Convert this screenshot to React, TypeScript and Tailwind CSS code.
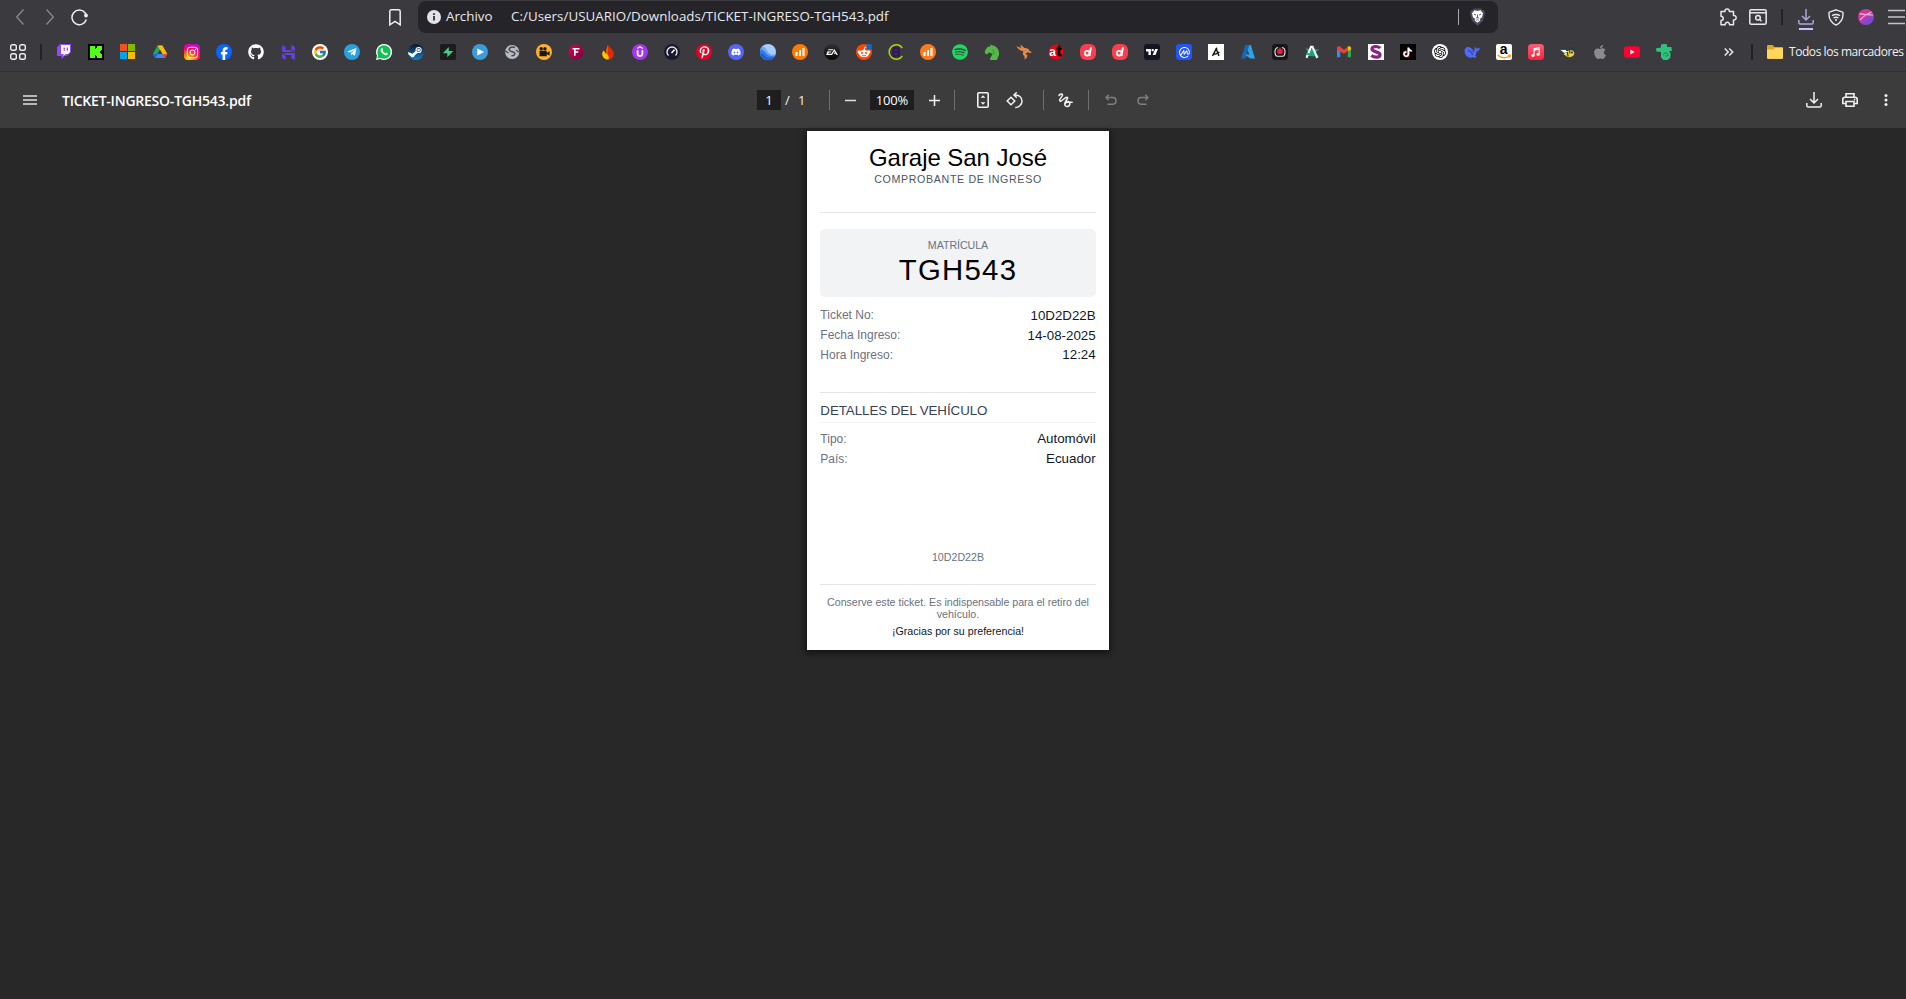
import React from "react";
import { FcGoogle } from "react-icons/fc";
import { FaApple, FaDiscord, FaGithub, FaPinterestP, FaInstagram, FaTelegramPlane } from "react-icons/fa";
import { SiHostinger, SiSpotify, SiTradingview, SiCoinmarketcap, SiOpenai, SiEa } from "react-icons/si";

type IconProps = { children: React.ReactNode };

const Svg = ({ children }: IconProps) => (
  <svg viewBox="0 0 16 16" className="h-4 w-4 overflow-visible">{children}</svg>
);

const Round = ({ className, children }: { className: string; children?: React.ReactNode }) => (
  <span className={`flex h-4 w-4 items-center justify-center overflow-hidden ${className}`}>{children}</span>
);

const Bars = ({ color }: { color: string }) => (
  <Svg>
    <circle cx="8" cy="8" r="8" fill={color} />
    <path d="M4.500 12V8M8 12V6M11.500 12V4" stroke="#fff" strokeWidth="2" />
  </Svg>
);

const LetterD = () => (
  <Svg>
    <rect width="16" height="16" rx="6" fill="#fb3d4e" />
    <circle cx="7.200" cy="9.200" r="2.300" fill="none" stroke="#fff" strokeWidth="1.800" />
    <path d="M11 3.200L9.400 12" stroke="#fff" strokeWidth="1.900" />
  </Svg>
);

const bookmarks: React.ReactNode[] = [
  <Svg>
    <path d="M4 0h11v8l-4 4H8.500L5.500 15.500V12H1V3z" fill="#9146ff" />
    <path d="M5 1h9v7l-2 2H9.500L7.500 12v-2H5z" fill="#fff" />
    <path d="M8.200 3.500v3.200M11.300 3.500v3.200" stroke="#9146ff" strokeWidth="1.300" />
  </Svg>,
  <Svg>
    <path d="M0 0h16v16H0z" fill="#000" />
    <path d="M2 2h5v3h1V4h1V2h5v4h-1v1h-1v2h1v1h1v4H9v-2H8v-1H7v3H2z" fill="#53fc18" />
  </Svg>,
  <Svg>
    <path d="M0 0h7v7H0z" fill="#f25022" />
    <path d="M8 0h7v7H8z" fill="#7fba00" />
    <path d="M0 8h7v7H0z" fill="#00a4ef" />
    <path d="M8 8h7v7H8z" fill="#ffb900" />
  </Svg>,
  <Svg>
    <path d="M5.500 1.500h5L5.500 10 3 14 .8 10z" fill="#1fa463" />
    <path d="M5.500 1.500h5L15.300 10h-5z" fill="#fbbc04" />
    <path d="M3.200 14L5.600 10h9.700L13 14z" fill="#4285f4" />
    <path d="M.8 10h4.800L3.200 14z" fill="#1967d2" />
    <path d="M10.300 10h5L13 14z" fill="#ea4335" />
    <path d="M8 6l2.300 4H5.700z" fill="#3b3a3f" />
  </Svg>,
  <Round className="rounded-[4px] bg-[radial-gradient(circle_at_25%_105%,#ffd600_8%,#ff7a00_32%,#ff0169_60%,#d300c5_82%,#7638fa_100%)] text-white"><FaInstagram size={13} /></Round>,
  <Svg>
    <circle cx="8" cy="8" r="8" fill="#0866ff" />
    <path d="M6.600 16v-5.400H4.900V8.100h1.700V7c0-2.700 1.200-3.900 3.800-3.900l1.200.1v2.200h-.9c-1.100 0-1.500.5-1.500 1.500v1.200h2.300l-.4 2.500H9.200V16z" fill="#fff" />
  </Svg>,
  <FaGithub size={16} color="#fff" />,
  <SiHostinger size={15} color="#673de6" />,
  <Round className="rounded-full bg-white"><FcGoogle size={14} /></Round>,
  <Round className="rounded-full bg-[#2aa1de] text-white"><FaTelegramPlane size={10} /></Round>,
  <Svg>
    <path d="M8 0a8 8 0 1 1-3.800 15L0 16l1-4.200A8 8 0 0 1 8 0z" fill="#fff" />
    <circle cx="8" cy="8" r="6.700" fill="#0fc152" />
    <path d="M2.300 10l-1 4.500L6 13.500z" fill="#0fc152" />
    <path d="M5.700 4.200c.5-.2.800 0 1 .5l.4 1c.1.300-.5.900-.5 1.100.6 1.100 1.400 1.900 2.600 2.400.3 0 .8-.9 1.100-.8l1.500.8c.2 1.500-1 2.100-2 2-2.600-.4-5-2.900-5.200-4.900 0-.9.500-1.700 1.100-2.100z" fill="#fff" />
  </Svg>,
  <Svg>
    <defs><linearGradient id="steam" x1="0" y1="0" x2="0" y2="1"><stop stopColor="#0b1530" /><stop offset="1" stopColor="#1383c1" /></linearGradient></defs>
    <circle cx="8" cy="8" r="8" fill="url(#steam)" />
    <path d="M0 8l4.500 1.800 4-3.500 2 1.800-3.800 3.400a2.200 2.200 0 0 1-4.200.4L.5 10.600z" fill="#fff" />
    <circle cx="10.600" cy="6" r="3.100" fill="#fff" />
    <circle cx="10.600" cy="6" r="2" fill="#0f2748" />
    <circle cx="10.600" cy="6" r="1.500" fill="#dce6f2" />
  </Svg>,
  <Svg>
    <rect width="16" height="16" rx="1.500" fill="#1c1c1c" />
    <path d="M8.800 3v4h4.500L7.300 13.200V9.300H2.800z" fill="#3ecf8e" />
  </Svg>,
  <Svg>
    <circle cx="8" cy="8" r="8" fill="#3d9dd8" />
    <path d="M5.300 4.500L12 8l-6.700 3.500z" fill="#fff" />
  </Svg>,
  <Svg>
    <circle cx="8.200" cy="8" r="7.100" fill="#b8bdc3" />
    <path d="M11 3.500C8.500 2.500 5 3.300 5.200 5.700c.2 2.400 5.800 1.600 5.600 4 0 1.500-1.700 2.100-3.300 2" fill="none" stroke="#44464c" strokeWidth="1.500" />
    <path d="M1.500 7L4.500 9M12 6l2.800 2.300" fill="none" stroke="#44464c" strokeWidth="1.200" />
  </Svg>,
  <Svg>
    <circle cx="8" cy="8" r="8" fill="#ffb02e" />
    <path d="M3.500 6.800h7.300v5.400H3.500zM10.800 9l2.800-2v4.800L10.800 10z" fill="#181818" />
    <circle cx="5.200" cy="4.700" r="1.700" fill="#181818" /><circle cx="8.900" cy="4.700" r="1.700" fill="#181818" />
  </Svg>,
  <Svg>
    <defs><linearGradient id="pinkF" x1="0" y1="0" x2="1" y2="1"><stop stopColor="#e60045" /><stop offset="1" stopColor="#720044" /></linearGradient></defs>
    <circle cx="8" cy="8" r="7.500" fill="url(#pinkF)" />
    <path d="M4.500 4.800h7M6.800 4.800v7M6.800 8h3.500" stroke="#fff" strokeWidth="1.600" fill="none" />
  </Svg>,
  <Svg>
    <path d="M8 .5c.8 3 5.800 4.500 5.800 9.300 0 3.700-2.800 5.700-5.800 5.700L5 12z" fill="#dd2c00" />
    <path d="M8 .5C7.600 3.200 6 4.800 6.200 8l1 6z" fill="#ff6d00" />
    <path d="M4 6.200C2.600 7.300 2 8.800 2.200 10.500c.3 3 2.800 5 6.300 5 1-3-1-5.500-2.500-6C5 9 4.300 7.800 4 6.200z" fill="#ffc400" />
  </Svg>,
  <Svg>
    <circle cx="8" cy="8" r="8" fill="#a435f0" />
    <path d="M5.200 4.400L8 2.800l2.800 1.600" stroke="#fff" strokeWidth="1.200" fill="none" />
    <path d="M5.600 6.300v3.500c0 3 4.800 3 4.800 0V6.300" stroke="#fff" strokeWidth="1.800" fill="none" />
  </Svg>,
  <Svg>
    <circle cx="8" cy="8" r="8" fill="#181a30" />
    <path d="M4.500 11.600a5 5 0 1 1 7 0" stroke="#e8e8ee" strokeWidth="1.400" fill="none" />
    <path d="M7.500 9l3-3.300" stroke="#fff" strokeWidth="1.600" />
  </Svg>,
  <Round className="rounded-full bg-[#e60023] text-white"><FaPinterestP size={13} className="mt-px" /></Round>,
  <Round className="rounded-full bg-[#5865f2] text-white"><FaDiscord size={10} /></Round>,
  <Svg>
    <clipPath id="earth"><circle cx="8" cy="8" r="8" /></clipPath>
    <g clipPath="url(#earth)">
      <path d="M0 0h16v16H0z" fill="#a7cdff" />
      <path d="M0 3c4-2 6 2 8 5s5 3 8 2v6H0z" fill="#6aa6fb" />
      <path d="M0 5.500c4-.5 5 3.500 8 5.500s6 1 8 0v5H0z" fill="#3478e8" />
      <path d="M0 9c3 0 4 3.500 7 4.500s5 .5 7-.5L12 16H0z" fill="#1a5fd0" />
    </g>
  </Svg>,
  <Bars color="#ff7a00" />,
  <Round className="rounded-full bg-linear-to-b from-[#303030] to-[#080808] text-white"><SiEa size={12} /></Round>,
  <Svg>
    <circle cx="8" cy="8" r="8" fill="#ff4500" />
    <circle cx="3.300" cy="8" r="1.700" fill="#fff" /><circle cx="12.700" cy="8" r="1.700" fill="#fff" />
    <ellipse cx="8" cy="9.600" rx="5" ry="3.700" fill="#fff" />
    <path d="M8 6l.8-3 2 .6" stroke="#fff" fill="none" />
    <circle cx="6" cy="8.900" r="1" fill="#ff4500" /><circle cx="10" cy="8.900" r="1" fill="#ff4500" />
    <path d="M5.800 11.200c1.300 1 3.100 1 4.400 0" stroke="#ff4500" fill="none" />
    <circle cx="13.300" cy="2.700" r="2.900" fill="#0a6bc6" />
  </Svg>,
  <Svg>
    <path d="M14.300 4A7.200 7.200 0 1 0 14.300 12" stroke="#a4d900" strokeWidth="1.500" fill="none" />
    <path d="M5.500 4h3.200c2.800 0 2.700 3.600.3 3.900 3 .3 2.900 4.100-.2 4.100H5.500zM5.500 8H9" fill="none" stroke="#341564" strokeWidth="2.200" />
  </Svg>,
  <Bars color="#ff7a1c" />,
  <Round className="rounded-full bg-[#3b3a3f] text-[#1ed760]"><SiSpotify size={16} /></Round>,
  <Svg>
    <path d="M1 6.500L3.500 3 6 2.500 6.500.5 8.500 1.500C13 2 15.500 6 15 11l-1 2-1 3H6c0-3 2-4 2.500-6.300L5 8.500 3 10.500.8 9z" fill="#55b848" />
    <path d="M8 6c1.500.5 2.300 2 2 4" stroke="#3b7835" strokeWidth=".8" fill="none" />
  </Svg>,
  <Svg>
    <path d="M.5 2l4.500 2L4.500.5 8.500 4c3 .1 4.500 1.200 5 2.800l2.300 1.500-1.300.8c-2.500-1.200-4.500-.5-4.800 1.200l1.800.7-.5 2.500-2.500 2.200c.8-3-.5-4-1.500-5C6.500 9 7 8 7.500 7.200 4.500 6.800 1.500 5.200.5 2z" fill="#e08a4a" />
  </Svg>,
  <Svg>
    <circle cx="8" cy="8" r="7.500" fill="#e90613" />
    <text x="1.300" y="12" fill="#fff" className="font-['Liberation_Sans'] text-[12px] font-bold">a</text>
    <text x="8.600" y="12.300" fill="#000" stroke="#000" strokeWidth=".8" className="font-['Liberation_Sans'] text-[14px] font-bold">t</text>
  </Svg>,
  <LetterD />,
  <LetterD />,
  <Round className="rounded-[3px] bg-[#131722] text-white"><SiTradingview size={12} /></Round>,
  <Round className="rounded-[3px] bg-[#2155f5] text-white"><SiCoinmarketcap size={11} /></Round>,
  <Svg>
    <path d="M0 0h16v16H0z" fill="#fff" />
    <path d="M4.500 12l3.700-7.200 2.800 7.200M4.500 10.500c3 0 5-1 7-2.500M7.500 4.800h1.800" stroke="#181818" strokeWidth="1.500" fill="none" />
  </Svg>,
  <Svg>
    <path d="M5.300 1h4.500L5.500 14.500H1z" fill="#1268b3" />
    <path d="M9.500 1h1.300L15 14.500h-4.600L4.500 10.500h4.800L7.700 6z" fill="#2fa3ea" />
  </Svg>,
  <Svg>
    <rect width="16" height="16" rx="3.500" fill="#171719" />
    <path d="M6 3.500C2.800 4 3 6 3 8s.2 4 2.500 4.300h5C12.800 12 13 10 13 8s.2-4-3-4.500" stroke="#e8e8e8" strokeWidth="1.100" fill="none" />
    <path d="M8 3l1.200 2.200h1.500v3.600L9.500 10h-3L5.300 8.800V5.200h1.500z" fill="#ee1b3a" />
  </Svg>,
  <Svg>
    <path d="M1.500 4.500l13.500 1-3.500 3 4 4.200-14.500-1 3.500-3z" fill="#14a878" />
    <path d="M2.500 13.800L7 2.800h1.500L13.300 14" stroke="#fff" strokeWidth="2" fill="none" />
    <path d="M2 10h3.500" stroke="#14a878" strokeWidth="1.800" />
  </Svg>,
  <Svg>
    <path d="M1 4v9.300h3.200V7z" fill="#4285f4" /><path d="M15 4v9.300h-3.200V7z" fill="#34a853" />
    <path d="M1 4.700V4c0-1.600 1.800-2.200 3.200-1.200L8 5.700v4L1 5.500z" fill="#ea4335" />
    <path d="M8 5.700l3.800-2.900v4L8 9.700z" fill="#ea4335" /><path d="M11.800 2.800C13.200 1.800 15 2.500 15 4v1.200l-3.200 2z" fill="#fbbc04" />
  </Svg>,
  <Svg>
    <path d="M0 0h16v16H0z" fill="#fff" />
    <path d="M12.200 4.200C9.500 1.700 4 2 4 5.100c0 3.600 8 2 8 5.600 0 3.200-5.800 3.200-8.600.7" stroke="#8b2384" strokeWidth="3.200" fill="none" />
  </Svg>,
  <Svg>
    <path d="M0 0h16v16H0z" fill="#000" />
    <path d="M8.100 3.500v6.300a2.200 2.200 0 1 1-2-2.200M8.100 3.500c.3 1.900 1.500 3 3.300 3" stroke="#25f4ee" strokeWidth="1.700" fill="none" />
    <path d="M8.900 4.100v6.300a2.200 2.200 0 1 1-2-2.200M8.900 4.100c.3 1.900 1.500 3 3.300 3" stroke="#fe2c55" strokeWidth="1.700" fill="none" />
    <path d="M8.500 3.800v6.300a2.200 2.200 0 1 1-2-2.200M8.500 3.800c.3 1.900 1.500 3 3.300 3" stroke="#fff" strokeWidth="1.300" fill="none" />
  </Svg>,
  <Round className="rounded-full bg-white text-black"><SiOpenai size={12} /></Round>,
  <Svg>
    <path d="M.5 7C.5 4 3 2.200 5.500 3.200c2.200.7 3 2.800 5 4 .2-1.500-.2-3 .4-4.300.8.900 1.300 1.500 2.300 1.500 1 0 1.600-.5 2.500-.6 0 2.100-1.200 3.400-3 3.700-.1 1.800-.8 3.300-1.700 4.300l1.700 1.300c-1.200.8-2.400.6-3.700.2C4.700 14.800.5 11.500.5 7z" fill="#4d6bfe" />
    <path d="M4 6.500c2.300.3 3.800 2 4.600 4.500M8 6.500l1.500 1.800" stroke="#363b5c" strokeWidth="1" fill="none" />
  </Svg>,
  <Svg>
    <rect width="16" height="16" rx="2" fill="#fff" />
    <text x="3.700" y="9.500" fill="#000" className="font-['Liberation_Sans'] text-[14px] font-bold">a</text>
    <path d="M1.500 11c4 3.200 8.800 3.200 12 1M11.800 11.300l2.500-.2-.6 2.500" stroke="#ff9900" strokeWidth="1.300" fill="none" />
  </Svg>,
  <Svg>
    <defs><linearGradient id="music" x1="0" y1="0" x2="0" y2="1"><stop stopColor="#fb5c74" /><stop offset="1" stopColor="#fa233b" /></linearGradient></defs>
    <rect width="16" height="16" rx="3.500" fill="url(#music)" />
    <path d="M6 11.500V4.800l5.200-1.300v6.800M6 6.200l5.200-1.200" stroke="#fff" strokeWidth="1.200" fill="none" />
    <ellipse cx="4.900" cy="11.600" rx="1.600" ry="1.300" fill="#fff" /><ellipse cx="10.100" cy="10.400" rx="1.600" ry="1.300" fill="#fff" />
  </Svg>,
  <Svg>
    <path d="M.3 5.800L5.500 5.500 8 8.500 4 8.800z" fill="#fff" />
    <path d="M3.500 10L6.800 8.500 6.500 12z" fill="#fff" />
    <path d="M.8 5h5L8.200 7.500" stroke="#14424b" strokeWidth="1.300" fill="none" />
    <ellipse cx="9.800" cy="9.700" rx="4.500" ry="3.300" transform="rotate(-15 9.800 9.700)" fill="#f2cf3d" />
    <path d="M7.300 8l.8 4.500M9.500 6.500l.5 3" stroke="#14424b" strokeWidth="1.200" />
    <circle cx="12" cy="8.500" r="1" fill="#14424b" />
    <path d="M10.500 5L11.500 3.500M13 5l2.300-2" stroke="#14424b" strokeWidth="1.500" />
  </Svg>,
  <FaApple size={16} color="#8b8b8d" />,
  <Svg>
    <rect y="2.300" width="16" height="11.400" rx="2.800" fill="#ff0033" />
    <path d="M6.400 5.600L10.600 8l-4.200 2.400z" fill="#fff" />
  </Svg>,
  <Svg>
    <path d="M5 .5L8 0l3 .3V3h4.500l.3 4h-2.600l1.500 2.500-.5 4.500-2.700 2H7.500L5 13.500V8L.3 7.500 0 4.300l5-.8z" fill="#30c17b" />
    <path d="M7.500 11c0-2.500 4-3 4.500-.5.200 1.700-2 2.300-2.600 1" stroke="#1f7f57" strokeWidth="1" fill="none" />
  </Svg>,
];

function NavigationBar() {
  return (
    <div className="flex h-[35px] items-start">
      <div className="flex h-[34px] w-[418px] items-center pl-4 text-[#f0f0f2]">
        <svg width="8" height="16" viewBox="0 0 8 16" fill="none" stroke="#85848a" strokeWidth="1.500"><path d="M7.500.5L.8 8l6.700 7.500" /></svg>
        <svg width="8" height="16" viewBox="0 0 8 16" fill="none" stroke="#85848a" strokeWidth="1.500" className="ml-[22px]"><path d="M.5.5L7.200 8 .5 15.500" /></svg>
        <svg width="17" height="17" viewBox="0 0 17 17" fill="none" stroke="currentColor" strokeWidth="1.500" className="ml-[17px]"><path d="M15.300 10.500A7.300 7.300 0 1 1 14 3.800l1 1.500" /><circle cx="15" cy="6.500" r="1.900" fill="currentColor" stroke="none" /></svg>
        <svg width="12" height="17" viewBox="0 0 12 17" fill="none" stroke="currentColor" strokeWidth="1.500" className="ml-[301px]"><path d="M.8 2.500C.8 1.300 1.300.8 2.500.8h7c1.200 0 1.700.5 1.700 1.700v13.300L6 12.300.8 15.800z" /></svg>
      </div>
      <div className="mt-px flex h-8 w-[1080px] items-center rounded-lg bg-[#242429] pl-[9px] text-[13.33px] text-[#e9e9ed]">
        <svg width="14" height="14" viewBox="0 0 14 14"><circle cx="7" cy="7" r="7" fill="#e3e2e8" /><path d="M7 6v4.500M7 3.200v1.700" stroke="#242429" strokeWidth="1.700" /></svg>
        <span className="ml-[5px] w-[65px] whitespace-nowrap">Archivo</span>
        <span className="flex-1 whitespace-nowrap tracking-[0.04px]">C:/Users/USUARIO/Downloads/TICKET-INGRESO-TGH543.pdf</span>
        <span className="h-4 w-px bg-[#a9a9ad]" />
        <svg width="15" height="18" viewBox="0 0 15 18" className="ml-[11px] mr-[13px]">
          <path d="M4 .5h7l1.500 1.600 1.200-.1L15 5l-2 8-5.500 4.700L2 13 0 5l1.300-3 1.200.1z" fill="#4c4c5e" />
          <path d="M4.500 2.300l3 .6 3-.6 2.500 3-1 4-2 1.500.3 1.700-2.800 2.200-2.800-2.200.3-1.700-2-1.500-1-4z" fill="#fff" />
          <path d="M3.800 6.200l2.200.8M11.200 6.200L9 7M7.500 6.500v3.300M5.800 10.200l1.700-.9 1.700.9M6.200 12.300l1.300-.9 1.300.9" stroke="#4c4c5e" strokeWidth=".9" fill="none" />
        </svg>
      </div>
      <div className="flex h-[34px] items-center pl-[221px] text-[#e9e9ed]">
        <svg width="19" height="18" viewBox="0 0 19 18" fill="none" stroke="currentColor" strokeWidth="1.500"><path d="M2 3.500h4c-.7-3.500 5-3.500 4.300 0H14.500V7.500c3.500-.5 3.500 5 0 4.500v4.800h-4c.5-3.300-4.800-3.300-4.300 0H2v-4.300c3-.2 3-4 0-4.300z" strokeLinejoin="round" /></svg>
        <svg width="18" height="16" viewBox="0 0 18 16" fill="none" stroke="currentColor" strokeWidth="1.500" className="ml-[11px]"><rect x=".8" y=".8" width="16.400" height="14.400" rx="1.500" /><path d="M1 3.800h16" /><circle cx="9" cy="8.700" r="2.300" /><path d="M10.500 10.200l2 2" /></svg>
        <span className="ml-[14px] h-4 w-0.5 bg-[#232226]" />
        <span className="ml-[15px] flex h-5 w-4 flex-col items-center self-end">
          <svg width="16" height="21" viewBox="0 0 16 21" fill="none" stroke="#aaa6dc" strokeWidth="1.500" className="shrink-0 -translate-y-[5px]"><path d="M8 0v10.500M4 7l4 4 4-4M.8 11v2.500c0 1 .5 1.500 1.500 1.500h11.400c1 0 1.500-.5 1.500-1.500V11" /><path d="M1 20h14" stroke="#c7c2ff" strokeWidth="2" /></svg>
        </span>
        <svg width="16" height="17" viewBox="0 0 16 17" fill="none" stroke="currentColor" strokeWidth="1.400" className="ml-[14px]"><path d="M8 .8l6.800 2.400c.8 5.500-.8 10-6.800 13C2 13.200.4 8.700 1.200 3.200z" /><path d="M4 6.700c2.500-1.500 5.500-1.500 8 0M5.500 9c1.500-1 3.500-1 5 0M7 11h2" /></svg>
        <svg width="16" height="16" viewBox="0 0 16 16" className="ml-[14px]">
          <defs><linearGradient id="avatar" x1=".1" y1="0" x2=".9" y2="1"><stop stopColor="#ee2f86" /><stop offset=".5" stopColor="#b33bb5" /><stop offset="1" stopColor="#4b57e0" /></linearGradient></defs>
          <circle cx="8" cy="8" r="8" fill="url(#avatar)" /><path d="M1.500 4.800c4 .2 9 1.200 13.500 1.200M2 11c3-3.500 7-6 11.500-8" stroke="#ffb3d2" strokeWidth="1.200" fill="none" />
        </svg>
        <svg width="17" height="16" viewBox="0 0 17 16" stroke="#c4c4c8" strokeWidth="1.600" className="ml-[14px]"><path d="M0 1.500h17M0 8h17M0 14.500h17" /></svg>
      </div>
    </div>
  );
}

function BookmarksBar() {
  return (
    <div className="flex h-[36px] items-center pb-[2px] pl-[10px] [&>*]:shrink-0">
      <svg width="16" height="16" viewBox="0 0 16 16" fill="none" stroke="#ededf0" strokeWidth="1.400"><rect x=".7" y=".7" width="5.600" height="5.600" rx="1.800" /><rect x="9.700" y=".7" width="5.600" height="5.600" rx="1.800" /><rect x=".7" y="9.700" width="5.600" height="5.600" rx="1.800" /><rect x="9.700" y="9.700" width="5.600" height="5.600" rx="1.800" /></svg>
      <span className="ml-[14px] h-4 w-0.5 bg-[#222226]" />
      <div className="ml-[6px] flex w-[1632px]">
        {bookmarks.map((icon, i) => (
          <span key={i} className="flex h-4 w-8 items-center justify-center">{icon}</span>
        ))}
      </div>
      <svg width="10" height="8" viewBox="0 0 10 8" fill="none" stroke="#e9e9ed" strokeWidth="1.500" className="ml-[44px]"><path d="M.7.500L4.200 4 .7 7.500M5.200.500L8.700 4 5.200 7.500" /></svg>
      <span className="ml-[17px] h-4 w-0.5 bg-[#222226]" />
      <svg width="16" height="14" viewBox="0 0 16 14" className="ml-[14px]"><path d="M0 1.500C0 .5.500 0 1.500 0h4L7.500 2H15c.6 0 1 .4 1 1v9.500c0 1-.5 1.500-1.500 1.500h-13C.5 14 0 13.500 0 12.500z" fill="#e0a526" /><path d="M0 4.500h6L8 3h8v9.500c0 .8-.5 1.200-1.300 1.200H1.300C.5 13.700 0 13.300 0 12.500z" fill="#ffd65c" /></svg>
      <span className="ml-[6px] whitespace-nowrap text-[12px] tracking-[-0.44px] text-[#f0f0f2]">Todos los marcadores</span>
    </div>
  );
}

const ToolDivider = ({ className }: { className: string }) => <span className={`h-5 w-px bg-[#6f6f6f] ${className}`} />;

function PdfToolbar() {
  return (
    <div className="flex h-14 items-center bg-[#3c3c3c] text-[#f1f1f1]">
      <svg width="14" height="10" viewBox="0 0 14 10" stroke="#e0e0e0" strokeWidth="1.600" className="ml-[23px]"><path d="M0 1h14M0 5h14M0 9h14" /></svg>
      <span className="ml-[25px] w-[695px] whitespace-nowrap text-[14px] font-semibold tracking-[-0.23px] text-white">TICKET-INGRESO-TGH543.pdf</span>
      <span className="flex h-5 w-6 items-center justify-center bg-[#1e1e1e] pt-px text-[13px] text-white">1</span>
      <span className="ml-1 w-[13px] pt-px text-[13px]">/</span>
      <span className="w-[15px] pt-px text-[13px]">1</span>
      <ToolDivider className="ml-4" />
      <svg width="11" height="11" viewBox="0 0 11 11" stroke="#e0e0e0" strokeWidth="1.500" className="ml-[15px]"><path d="M0 5.500h11" /></svg>
      <span className="ml-[14px] flex h-5 w-11 items-center justify-center bg-[#1e1e1e] pt-px text-[13px] tracking-[-0.15px] text-white">100%</span>
      <svg width="11" height="11" viewBox="0 0 11 11" stroke="#f1f1f1" strokeWidth="1.500" className="ml-[15px]"><path d="M0 5.500h11M5.500 0v11" /></svg>
      <ToolDivider className="ml-[14px]" />
      <svg width="12" height="16" viewBox="0 0 12 16" fill="none" stroke="currentColor" strokeWidth="1.600" className="ml-[22px]"><rect x=".8" y=".8" width="10.400" height="14.400" rx="1" /><path d="M3.600 5.800L6 3.300l2.400 2.500zM3.600 10.200L6 12.700l2.400-2.500z" fill="currentColor" stroke="none" /></svg>
      <svg width="17" height="17" viewBox="0 0 17 17" fill="none" stroke="currentColor" strokeWidth="1.500" className="ml-[17px]"><path d="M5 5.200L8.800 9 5 12.800 1.200 9z" /><path d="M8 3c5-.5 8 2.500 8 6 0 3.500-2.800 6.500-6.800 6.500M10.800.3L8 3l2.800 2.800" /></svg>
      <ToolDivider className="ml-[20px]" />
      <svg width="15" height="15" viewBox="0 0 15 15" fill="none" stroke="currentColor" strokeWidth="1.500" strokeLinecap="round" className="ml-[14px]"><path d="M1 2.500C2 .8 4.500.3 4.500 2 4.500 3.800 1 6 1.700 7.700 2.700 9.800 6.500 4.300 9 4.300c2.300.3-2.300 3.900-2.300 6.700 0 3.800 5.300 3.300 5.100-.8-.2-2.700-3.800-2-4.300.3M9 9.300h5.200" /></svg>
      <ToolDivider className="ml-[15px]" />
      <svg width="12" height="12" viewBox="0 0 12 12" fill="none" stroke="#7d7d7d" strokeWidth="1.500" className="ml-[16px]"><path d="M3.700.700L1 3.500l2.700 2.800M1 3.500h7c4 0 4 6.700 0 6.700H2.500" /></svg>
      <svg width="12" height="12" viewBox="0 0 12 12" fill="none" stroke="#7d7d7d" strokeWidth="1.500" className="ml-[20px]"><path d="M8.300.700L11 3.500 8.300 6.300M11 3.500H4c-4 0-4 6.700 0 6.700h5.500" /></svg>
      <span className="flex-1" />
      <svg width="16" height="16" viewBox="0 0 16 16" fill="none" stroke="currentColor" strokeWidth="1.500"><path d="M8 0v10.500M4 7l4 4 4-4M.8 11v2.500c0 1 .5 1.500 1.500 1.500h11.400c1 0 1.500-.5 1.500-1.500V11" /></svg>
      <svg width="16" height="14" viewBox="0 0 16 14" fill="none" stroke="currentColor" strokeWidth="1.600" className="ml-5"><path d="M4 4V.8h8V4M4 10.500H.8V6.500c0-1.600.6-2.300 2.200-2.300h10c1.600 0 2.200.700 2.200 2.300v4H12M4 8.500h8v4.700H4z" /><path d="M11.800 6.500h1.500" /></svg>
      <svg width="4" height="12" viewBox="0 0 4 12" fill="currentColor" className="ml-[26px] mr-[18px]"><circle cx="2" cy="1.500" r="1.500" /><circle cx="2" cy="6" r="1.500" /><circle cx="2" cy="10.500" r="1.500" /></svg>
    </div>
  );
}

const Row = ({ label, value, valueClass = "" }: { label: string; value: string; valueClass?: string }) => (
  <div className="flex h-5 items-center justify-between">
    <span className="text-[12px] leading-5 text-[#6b7280]">{label}</span>
    <span className={`text-[13.33px] leading-5 text-[#111827] ${valueClass}`}>{value}</span>
  </div>
);

function Ticket() {
  return (
    <div className="mx-auto mt-[3px] flex h-[519px] w-[302px] flex-col bg-white px-[13.33px] pt-[13px] font-['Liberation_Sans',Arial,sans-serif] shadow-[0_2px_6px_2px_rgba(0,0,0,0.45)]">
      <h1 className="text-center text-[24px] leading-[28px] tracking-[-0.05px] text-black">Garaje San José</h1>
      <p className="text-center text-[10.67px] leading-[15px] tracking-[0.65px] text-[#4b5563]">COMPROBANTE DE INGRESO</p>
      <div className="mt-[25px] h-px bg-[#e1e3e6]" />
      <div className="mt-4 flex h-[68px] flex-col items-center rounded-[5px] bg-[#f2f3f5] pt-[9px]">
        <span className="text-[10.67px] leading-[15px] tracking-[-0.05px] text-[#6b7280]">MATRÍCULA</span>
        <span className="text-[29.33px] leading-[34px] tracking-[1.3px] text-black">TGH543</span>
      </div>
      <div className="mt-2">
        <Row label="Ticket No:" value="10D2D22B" valueClass="pt-0.5" />
        <Row label="Fecha Ingreso:" value="14-08-2025" valueClass="pt-0.5" />
        <Row label="Hora Ingreso:" value="12:24" />
      </div>
      <div className="mt-[27px] h-px bg-[#e1e3e6]" />
      <h2 className="mt-2 text-[13.33px] leading-5 tracking-[-0.05px] text-[#374151]">DETALLES DEL VEHÍCULO</h2>
      <div className="mt-px mb-[6px] h-px bg-[#f3f4f6]" />
      <Row label="Tipo:" value="Automóvil" />
      <Row label="País:" value="Ecuador" />
      <p className="mt-[80px] text-center text-[10.67px] leading-4 text-[#6b7280]">10D2D22B</p>
      <div className="mt-[19px] h-px bg-[#e1e3e6]" />
      <p className="mt-[11px] text-center text-[10.67px] leading-[12px] tracking-[-0.02px] text-[#6b7280]">Conserve este ticket. Es indispensable para el retiro del vehículo.</p>
      <p className="mt-[5px] text-center text-[10.67px] leading-[12px] text-[#111827]">¡Gracias por su preferencia!</p>
    </div>
  );
}

export default function App() {
  return (
    <div className="flex h-[999px] w-[1906px] flex-col overflow-hidden bg-[#3b3a3f] font-['Open_Sans','Noto_Sans',sans-serif]">
      <NavigationBar />
      <BookmarksBar />
      <div className="h-px bg-[#302f34]" />
      <PdfToolbar />
      <main className="flex-1 border-b-2 border-[#2b282d] bg-[#282828] pl-[10px]">
        <Ticket />
      </main>
    </div>
  );
}
